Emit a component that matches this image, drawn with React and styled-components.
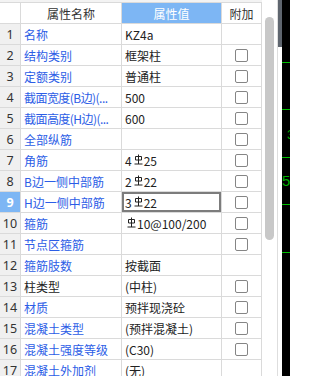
import React from 'react';
import styled, { createGlobalStyle, css } from 'styled-components';

const GlobalStyle = createGlobalStyle`
  html, body {
    margin: 0;
    padding: 0;
    width: 290px;
    height: 376px;
    overflow: hidden;
    background: #ffffff;
  }
  body {
    font-family: "Noto Sans CJK SC", "Noto Sans", sans-serif;
  }
`;

const LINE = '#dadada';

const Page = styled.div`
  display: flex;
  width: 290px;
  height: 376px;
  overflow: hidden;
  background: #fff;
`;

const TablePane = styled.div`
  width: 262px;
  flex-shrink: 0;
  padding-top: 2px;
  background: #f3f3f3;
`;

const Grid = styled.div`
  display: grid;
  grid-template-columns: 20px 100px 99px 39px;
  grid-auto-rows: 20px;
  gap: 1px;
  background: ${LINE};
  border-top: 1px solid ${LINE};
  border-right: 1px solid ${LINE};
`;

const HeadCell = styled.div`
  display: flex;
  align-items: center;
  justify-content: center;
  font-size: 12px;
  color: ${p => (p.$active ? '#ffffff' : '#333')};
  background: ${p => (p.$active ? '#7db6f4' : '#ffffff')};
`;

const IndexCell = styled.div`
  display: flex;
  align-items: center;
  justify-content: center;
  font-family: "Noto Sans", sans-serif;
  font-size: 12.5px;
  color: ${p => (p.$selected ? '#ffffff' : '#333')};
  font-weight: ${p => (p.$selected ? 700 : 400)};
  background: ${p => (p.$selected ? '#7db6f4' : '#f0f0f0')};
`;

const NameCell = styled.div`
  display: flex;
  align-items: center;
  padding-left: 3px;
  font-size: 12px;
  letter-spacing: ${p => (p.$squeeze ? '-0.55px' : '0')};
  white-space: nowrap;
  overflow: hidden;
  background: #fff;
  color: ${p => (p.$plain ? '#222' : '#2c5de6')};
`;

const ValueCell = styled.div`
  display: flex;
  align-items: center;
  padding-left: 3px;
  font-size: 12px;
  white-space: pre;
  overflow: hidden;
  background: #fff;
  color: #222;
  ${p =>
    p.$editing &&
    css`
      box-shadow: inset 0 0 0 2px #7c7c7c;
    `}
`;

const AddCell = styled.div`
  display: flex;
  align-items: center;
  justify-content: center;
  background: #fff;
`;

const CheckBox = styled.span`
  width: 11px;
  height: 11px;
  border: 1px solid #858585;
  border-radius: 2px;
  background: #fff;
`;

const Steel = styled.svg`
  width: 9px;
  height: 11px;
  margin: 0 1px 1px 2px;
  flex-shrink: 0;
`;

const ScrollTrack = styled.div`
  width: 15px;
  flex-shrink: 0;
  padding: 17px 0 0 3px;
  box-sizing: border-box;
  background: #fff;
`;

const Thumb = styled.div`
  width: 9px;
  height: 223px;
  border-radius: 5px;
  background: #c8c8c8;
`;

const Divider = styled.div`
  width: 1px;
  flex-shrink: 0;
  background: #dedede;
`;

const SideStrip = styled.div`
  width: 4px;
  flex-shrink: 0;
  background: linear-gradient(#5f666f 0 47px, #ffffff 47px);
`;

const Canvas = styled.div`
  flex: 1;
  background: #000;
`;

const SteelMark = () => (
  <Steel viewBox="0 0 9 11">
    <path d="M1.5 2.5h6v3.5h-6z M4.5 0.5v9.5 M0.5 10h8" stroke="#222" strokeWidth="1" fill="none" />
  </Steel>
);

const Rebar = ({ pre, post }) => (
  <>
    {pre}
    <SteelMark />
    {post}
  </>
);

const rows = [
  { name: '名称', value: 'KZ4a', check: false },
  { name: '结构类别', value: '框架柱', check: true },
  { name: '定额类别', value: '普通柱', check: true },
  { name: '截面宽度(B边)(...', value: '500', check: true, squeeze: true },
  { name: '截面高度(H边)(...', value: '600', check: true, squeeze: true },
  { name: '全部纵筋', value: '', check: true },
  { name: '角筋', value: <Rebar pre="4" post="25" />, check: true },
  { name: 'B边一侧中部筋', value: <Rebar pre="2" post="22" />, check: true },
  { name: 'H边一侧中部筋', value: <Rebar pre="3" post="22" />, check: true, selected: true },
  { name: '箍筋', value: <Rebar pre=" " post="10@100/200" />, check: true },
  { name: '节点区箍筋', value: '', check: true },
  { name: '箍筋肢数', value: '按截面', check: false },
  { name: '柱类型', value: '(中柱)', check: true, plain: true },
  { name: '材质', value: '预拌现浇砼', check: true },
  { name: '混凝土类型', value: '(预拌混凝土)', check: true },
  { name: '混凝土强度等级', value: '(C30)', check: true },
  { name: '混凝土外加剂', value: '(无)', check: false },
];

const CadView = () => (
  <svg width="8" height="376" viewBox="0 0 8 376">
    {[62, 109, 157, 204, 252].map(y => (
      <line key={y} x1="0" x2="8" y1={y + 0.5} y2={y + 0.5} stroke="#00c000" strokeWidth="1" />
    ))}
    <text x="5" y="139" fill="#00b000" fontSize="13" fontFamily="Liberation Sans, sans-serif">3</text>
    <text x="0" y="186" fill="#00b000" fontSize="15" fontFamily="Liberation Sans, sans-serif">5</text>
  </svg>
);

export default function App() {
  return (
    <>
      <GlobalStyle />
      <Page>
        <TablePane>
          <Grid>
            <HeadCell />
            <HeadCell>属性名称</HeadCell>
            <HeadCell $active>属性值</HeadCell>
            <HeadCell>附加</HeadCell>
            {rows.map((row, i) => (
              <React.Fragment key={i}>
                <IndexCell $selected={row.selected}>{i + 1}</IndexCell>
                <NameCell $plain={row.plain} $squeeze={row.squeeze}>{row.name}</NameCell>
                <ValueCell $editing={row.selected}>{row.value}</ValueCell>
                <AddCell>{row.check && <CheckBox />}</AddCell>
              </React.Fragment>
            ))}
          </Grid>
        </TablePane>
        <ScrollTrack>
          <Thumb />
        </ScrollTrack>
        <Divider />
        <SideStrip />
        <Canvas>
          <CadView />
        </Canvas>
      </Page>
    </>
  );
}
